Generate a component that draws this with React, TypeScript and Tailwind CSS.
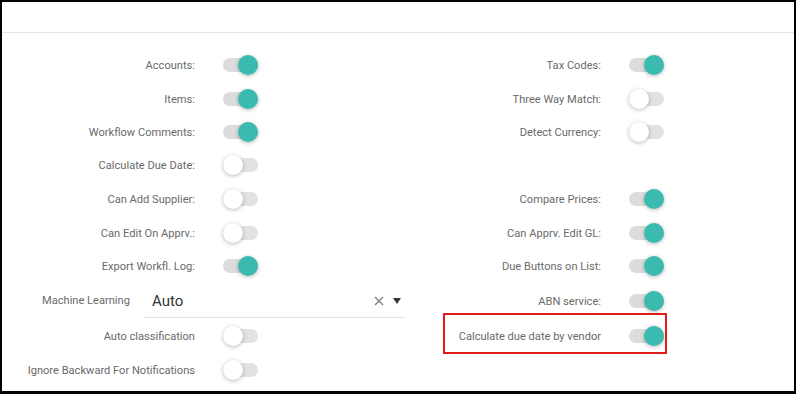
import React from "react";

function Switch({ on }: { on: boolean }) {
  return (
    <div className="relative w-[35px] h-5 shrink-0">
      <div className={`absolute left-0 right-0 top-[3px] h-[14px] rounded-full ${on ? "bg-[#dcdcdc]" : "bg-[#e2e2e2]"}`} />
      <div
        className={`absolute top-0 w-5 h-5 rounded-full shadow-[0_1px_4px_rgba(0,0,0,0.28)] ${on ? "right-0 bg-[#3bbbaf]" : "left-0 bg-white"}`}
      />
    </div>
  );
}

function ToggleCell({ label, on }: { label: string; on: boolean }) {
  return (
    <div className="flex items-center h-full">
      <div className="w-[193px] pt-[2px] text-right text-[11.1px] text-[#6a6a6a] leading-none whitespace-nowrap">{label}</div>
      <div className="ml-[28px]">
        <Switch on={on} />
      </div>
    </div>
  );
}

type Cell = { label: string; on: boolean } | null | "ml" | "vendor";

const rows: { h: string; left: Cell; right: Cell }[] = [
  { h: "h-[34px]", left: { label: "Accounts:", on: true }, right: { label: "Tax Codes:", on: true } },
  { h: "h-[33px]", left: { label: "Items:", on: true }, right: { label: "Three Way Match:", on: false } },
  { h: "h-[33px]", left: { label: "Workflow Comments:", on: true }, right: { label: "Detect Currency:", on: false } },
  { h: "h-[34px]", left: { label: "Calculate Due Date:", on: false }, right: null },
  { h: "h-[34px]", left: { label: "Can Add Supplier:", on: false }, right: { label: "Compare Prices:", on: true } },
  { h: "h-[33px]", left: { label: "Can Edit On Apprv.:", on: false }, right: { label: "Can Apprv. Edit GL:", on: true } },
  { h: "h-[34px]", left: { label: "Export Workfl. Log:", on: true }, right: { label: "Due Buttons on List:", on: true } },
  { h: "h-[35px]", left: "ml", right: { label: "ABN service:", on: true } },
  { h: "h-[35px]", left: { label: "Auto classification", on: false }, right: "vendor" },
  { h: "h-[34px]", left: { label: "Ignore Backward For Notifications", on: false }, right: null },
];

function MLCell() {
  return (
    <div className="flex items-center h-full pl-[40px] pr-[3px]">
      <div className="w-[102px] text-[11.1px] text-[#6a6a6a] leading-none whitespace-nowrap">Machine Learning</div>
      <div className="flex-1 flex items-center h-[32px] mt-[2px] border-b border-[#e3e3e3] pl-[8px] pr-[4px]">
        <span className="flex-1 text-[15px] text-[#333] leading-none">Auto</span>
        <svg width="10" height="10" viewBox="0 0 10 10" className="mr-[9px]">
          <path d="M1 1 L9 9 M9 1 L1 9" stroke="#8a8a8a" strokeWidth="1.6" />
        </svg>
        <svg width="8" height="6" viewBox="0 0 8 6">
          <path d="M0 0 L8 0 L4 6 Z" fill="#333" />
        </svg>
      </div>
    </div>
  );
}

function renderCell(c: Cell) {
  if (c === null) return <div />;
  if (c === "ml") return <MLCell />;
  if (c === "vendor")
    return (
      <div className="relative h-full">
        <ToggleCell label="Calculate due date by vendor" on={true} />
        <div className="absolute left-[35px] top-[-5px] w-[224px] h-[41px] border-2 border-[#e21b1b]" />
      </div>
    );
  return <ToggleCell label={c.label} on={c.on} />;
}

export default function App() {
  return (
    <div
      className="w-[796px] h-[394px] bg-white border-t-2 border-l-2 border-r-2 border-b-[3px] border-black overflow-hidden"
      style={{ fontFamily: "Roboto, 'Noto Sans', sans-serif" }}
    >
      <div className="h-[30px]" />
      <div className="h-px bg-[#e3e7ec]" />
      <div className="pt-[15px]">
        {rows.map((r, i) => (
          <div key={i} className={`grid grid-cols-[406px_1fr] ${r.h}`}>
            {renderCell(r.left)}
            {renderCell(r.right)}
          </div>
        ))}
      </div>
    </div>
  );
}
